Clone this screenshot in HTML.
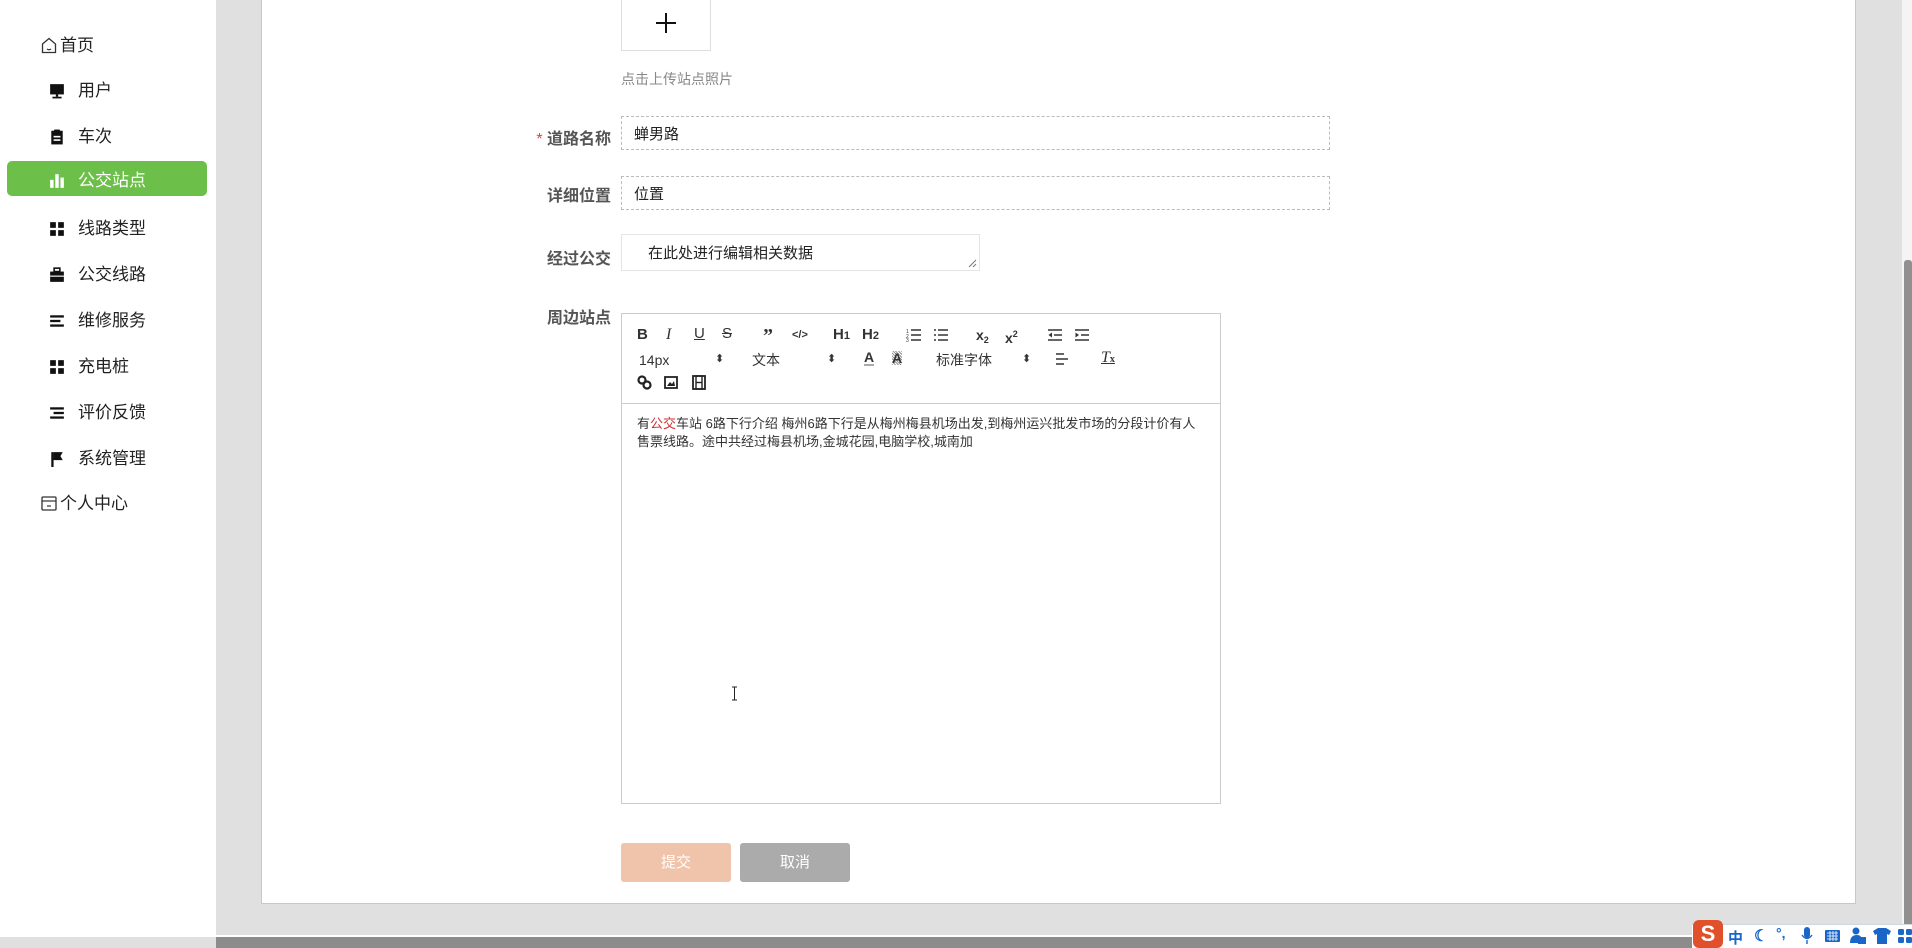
<!DOCTYPE html>
<html><head><meta charset="utf-8">
<style>
*{margin:0;padding:0;box-sizing:border-box}
body{width:1912px;height:948px;overflow:hidden;background:#e0e0e0;font-family:"Liberation Sans","Noto Sans CJK SC",sans-serif;position:relative;color:#333}
.a{position:absolute}
#side{left:0;top:0;width:216px;height:937px;background:#fff}
.it{position:absolute;left:0;width:216px;font-size:17px;color:#222;line-height:20px;height:20px}
.it .ic{position:absolute;left:49px;top:2px;width:16px;height:16px}
.it .tx{position:absolute;left:78px;top:0}
#panel{left:261px;top:-2px;width:1595px;height:906px;background:#fff;border:1px solid #c8c8c8}
.lbl{position:absolute;font-size:16px;color:#555;font-weight:bold;right:1301px;text-align:right}
.inp{position:absolute;left:621px;border:1px dashed #bbb;font-size:15px;color:#222;padding-left:12px}
.tb{position:absolute;font-size:14px;color:#333;line-height:16px}
.btn{position:absolute;top:843px;height:39px;width:110px;border-radius:3px;color:#fff;font-size:15px;text-align:center;line-height:39px}
</style></head><body>
<div class="a" id="side">
  <div class="it" style="top:36px"><svg class="ic" style="left:41px;top:1px;width:16px;height:17px" viewBox="0 0 16 17"><path d="M1.5 7L8 1.5 14.5 7V15.5H1.5Z" fill="none" stroke="#333" stroke-width="1.3"/><path d="M6 12q2 1.5 4 0" fill="none" stroke="#333" stroke-width="1.2"/></svg><span class="tx" style="left:60px">首页</span></div>
  <div class="it" style="top:81px"><svg class="ic" viewBox="0 0 14 14"><rect x="1" y="1" width="12" height="9" fill="#111"/><rect x="6" y="10" width="2" height="2" fill="#111"/><rect x="3" y="12" width="8" height="1.5" fill="#111"/></svg><span class="tx">用户</span></div>
  <div class="it" style="top:127px"><svg class="ic" viewBox="0 0 14 14"><rect x="2" y="1.5" width="10" height="12" fill="#111"/><rect x="4.5" y="0.5" width="5" height="2.5" fill="#111"/><rect x="4" y="6" width="6" height="1.4" fill="#fff"/><rect x="4" y="9" width="6" height="1.4" fill="#fff"/></svg><span class="tx">车次</span></div>
  <div class="a" style="left:7px;top:161px;width:200px;height:35px;background:#6cc04a;border-radius:5px"></div>
  <div class="it" style="top:171px;color:#fff"><svg class="ic" viewBox="0 0 14 14"><rect x="1" y="6" width="3" height="7" fill="#fff"/><rect x="5.5" y="1" width="3" height="12" fill="#fff"/><rect x="10" y="4" width="3" height="9" fill="#fff"/></svg><span class="tx">公交站点</span></div>
  <div class="it" style="top:219px"><svg class="ic" viewBox="0 0 14 14"><rect x="1" y="1" width="5" height="5" fill="#111"/><rect x="8" y="1" width="5" height="5" fill="#111"/><rect x="1" y="8" width="5" height="5" fill="#111"/><rect x="8" y="8" width="5" height="5" fill="#111"/></svg><span class="tx">线路类型</span></div>
  <div class="it" style="top:265px"><svg class="ic" viewBox="0 0 14 14"><rect x="1" y="4" width="12" height="9" fill="#111"/><rect x="4.5" y="1" width="5" height="3" fill="none" stroke="#111" stroke-width="1.4"/><rect x="1" y="7.5" width="12" height="1" fill="#fff"/></svg><span class="tx">公交线路</span></div>
  <div class="it" style="top:311px"><svg class="ic" viewBox="0 0 14 14"><rect x="1" y="2" width="12" height="2" fill="#111"/><rect x="1" y="6" width="9" height="2" fill="#111"/><rect x="1" y="10" width="12" height="2" fill="#111"/></svg><span class="tx">维修服务</span></div>
  <div class="it" style="top:357px"><svg class="ic" viewBox="0 0 14 14"><rect x="1" y="1" width="5" height="5" fill="#111"/><rect x="8" y="1" width="5" height="5" fill="#111"/><rect x="1" y="8" width="5" height="5" fill="#111"/><rect x="8" y="8" width="5" height="5" fill="#111"/></svg><span class="tx">充电桩</span></div>
  <div class="it" style="top:403px"><svg class="ic" viewBox="0 0 14 14"><rect x="1" y="2" width="12" height="2" fill="#111"/><rect x="4" y="6" width="9" height="2" fill="#111"/><rect x="1" y="10" width="12" height="2" fill="#111"/></svg><span class="tx">评价反馈</span></div>
  <div class="it" style="top:449px"><svg class="ic" viewBox="0 0 14 14"><rect x="2" y="1" width="2" height="13" fill="#111"/><path d="M4 1H12L10 4.5 12 8H4Z" fill="#111"/></svg><span class="tx">系统管理</span></div>
  <div class="it" style="top:494px"><svg class="ic" style="left:41px;top:2px;width:16px;height:15px" viewBox="0 0 16 15"><rect x="1" y="1" width="14" height="13" rx="1" fill="none" stroke="#333" stroke-width="1.3"/><path d="M1 5H15" stroke="#333" stroke-width="1.2"/><path d="M6 10H10" stroke="#333" stroke-width="1.2"/></svg><span class="tx" style="left:60px">个人中心</span></div>
</div>

<div class="a" id="panel"></div>
<div class="a" style="left:1902px;top:0;width:10px;height:937px;background:#f4f4f4"></div>
<div class="a" style="left:1904px;top:260px;width:8px;height:675px;background:#909090;border-radius:3px 3px 0 0"></div>
<div class="a" style="left:0;top:935px;width:1912px;height:2px;background:#fff"></div>
<div class="a" style="left:216px;top:937px;width:1696px;height:11px;background:#8c8c8c"></div>

<div class="a" style="left:621px;top:-2px;width:90px;height:53px;border:1px solid #ddd"></div>
<div class="a" style="left:656px;top:22px;width:20px;height:1.6px;background:#111"></div>
<div class="a" style="left:665.2px;top:13px;width:1.6px;height:20px;background:#111"></div>
<div class="a" style="left:621px;top:69px;font-size:14px;color:#888">点击上传站点照片</div>

<div class="lbl" style="top:125px"><span style="color:#e04040;font-weight:normal">* </span>道路名称</div>
<div class="inp" style="top:116px;width:709px;height:34px;line-height:35px">蝉男路</div>
<div class="lbl" style="top:182px">详细位置</div>
<div class="inp" style="top:176px;width:709px;height:34px;line-height:35px">位置</div>
<div class="lbl" style="top:245px">经过公交</div>
<div class="inp" style="top:234px;width:359px;height:37px;line-height:37px;border:1px solid #e5e5e5;padding-left:26px">在此处进行编辑相关数据</div>
<svg class="a" style="left:968px;top:259px" width="9" height="9"><path d="M8 1L1 8M8 5L5 8" stroke="#777"/></svg>
<div class="lbl" style="top:304px">周边站点</div>

<div class="a" style="left:621px;top:313px;width:600px;height:491px;border:1px solid #ccc"></div>
<div class="a" style="left:622px;top:403px;width:598px;height:1px;background:#ccc"></div>
<div class="tb" style="left:637px;top:327px;font-weight:bold;font-size:15px">B</div>
<div class="tb" style="left:666px;top:327px;font-style:italic;font-family:'Liberation Serif',serif;font-size:16px">I</div>
<div class="tb" style="left:694px;top:326px;text-decoration:underline;font-size:15px">U</div>
<div class="tb" style="left:722px;top:326px;text-decoration:line-through;font-size:15px">S</div>
<div class="tb" style="left:763px;top:328px;font-weight:bold;font-size:20px;font-family:'Liberation Serif',serif">”</div>
<div class="tb" style="left:792px;top:327px;font-size:11px;font-weight:bold">&lt;/&gt;</div>
<div class="tb" style="left:833px;top:327px;font-size:15px;font-weight:bold">H<span style="font-size:11px">1</span></div>
<div class="tb" style="left:862px;top:327px;font-size:15px;font-weight:bold">H<span style="font-size:11px">2</span></div>
<svg class="a" style="left:906px;top:328px" width="16" height="14"><path d="M5 2H15M5 7H15M5 12H15" stroke="#333" stroke-width="1.4"/><text x="0" y="5" font-size="5" fill="#333">1</text><text x="0" y="10" font-size="5" fill="#333">2</text><text x="0" y="14" font-size="5" fill="#333">3</text></svg>
<svg class="a" style="left:933px;top:328px" width="16" height="14"><path d="M5 2H15M5 7H15M5 12H15M1 2H3M1 7H3M1 12H3" stroke="#333" stroke-width="1.4"/></svg>
<div class="tb" style="left:976px;top:327px;font-weight:bold;font-size:14px">x<span style="font-size:9px;vertical-align:-3px">2</span></div>
<div class="tb" style="left:1005px;top:326px;font-weight:bold;font-size:14px">x<span style="font-size:9px;vertical-align:6px">2</span></div>
<svg class="a" style="left:1047px;top:328px" width="16" height="14"><path d="M1 2H15M7 7H15M1 12H15" stroke="#333" stroke-width="1.6"/><path d="M5 4.5L1.5 7 5 9.5Z" fill="#333"/></svg>
<svg class="a" style="left:1074px;top:328px" width="16" height="14"><path d="M1 2H15M7 7H15M1 12H15" stroke="#333" stroke-width="1.6"/><path d="M1.5 4.5L5 7 1.5 9.5Z" fill="#333"/></svg>

<div class="tb" style="left:639px;top:352px;font-size:14px">14px</div>
<div class="tb" style="left:715px;top:351px;font-size:11px">⬍</div>
<div class="tb" style="left:752px;top:352px;font-size:14px">文本</div>
<div class="tb" style="left:827px;top:351px;font-size:11px">⬍</div>
<div class="tb" style="left:864px;top:350px;font-weight:bold;font-size:14px;border-bottom:2px solid #aaa;line-height:14px">A</div>
<div class="tb" style="left:892px;top:351px;font-weight:bold;font-size:14px;background:repeating-linear-gradient(45deg,#999 0 1px,#fff 1px 2px);line-height:14px">A</div>
<div class="tb" style="left:936px;top:352px;font-size:14px">标准字体</div>
<div class="tb" style="left:1022px;top:351px;font-size:11px">⬍</div>
<svg class="a" style="left:1055px;top:352px" width="14" height="14"><path d="M1 2H9M1 7H13M1 12H9" stroke="#333" stroke-width="1.6"/></svg>
<div class="tb" style="left:1101px;top:350px;font-style:italic;font-family:'Liberation Serif',serif;font-size:16px;text-decoration:underline">T<span style="font-size:10px;font-style:normal;font-weight:bold">x</span></div>

<svg class="a" style="left:637px;top:375px" width="15" height="15"><circle cx="5" cy="5" r="3.5" fill="none" stroke="#222" stroke-width="2.2"/><circle cx="10" cy="10" r="3.5" fill="none" stroke="#222" stroke-width="2.2"/></svg>
<svg class="a" style="left:664px;top:376px" width="14" height="13"><rect x="1" y="1" width="12" height="11" fill="none" stroke="#222" stroke-width="1.8"/><path d="M3 10L6 6 8 8 10 5 11 10Z" fill="#222"/></svg>
<svg class="a" style="left:692px;top:375px" width="14" height="15"><rect x="1" y="1" width="12" height="13" fill="none" stroke="#222" stroke-width="1.8"/><rect x="4" y="1" width="6" height="13" fill="none" stroke="#222" stroke-width="1.4"/><path d="M4 7.5H10" stroke="#222" stroke-width="1.4"/></svg>

<div class="a" style="left:637px;top:415px;font-size:13px;line-height:18px;color:#333;width:570px">有<span style="color:#d03030">公交</span>车站 6路下行介绍 梅州6路下行是从梅州梅县机场出发,到梅州运兴批发市场的分段计价有人售票线路。途中共经过梅县机场,金城花园,电脑学校,城南加</div>

<div class="a" style="left:731px;top:686px;width:7px;height:15px"><svg width="7" height="15"><path d="M1 1H6M3.5 1V14M1 14H6" stroke="#222" stroke-width="1"/></svg></div>

<div class="btn" style="left:621px;background:#f0c3ab">提交</div>
<div class="btn" style="left:740px;background:#ababab">取消</div>

<div class="a" style="left:1692px;top:924px;width:220px;height:24px;background:#fff;border-top:1px solid #cfd8e0"></div>
<div class="a" style="left:1693px;top:920px;width:30px;height:28px;background:#e0502a;border-radius:6px;color:#fff;font-weight:bold;font-size:22px;text-align:center;line-height:28px">S</div>
<div class="a" style="left:1728px;top:927px;font-size:15px;color:#1a66c8;font-weight:bold">中</div>
<div class="a" style="left:1754px;top:926px;font-size:16px;color:#1a66c8;font-weight:bold">☾</div>
<div class="a" style="left:1776px;top:925px;font-size:14px;color:#1a66c8;font-weight:bold">°,</div>
<svg class="a" style="left:1801px;top:927px" width="12" height="18"><rect x="3" y="0" width="6" height="11" rx="3" fill="#1a66c8"/><path d="M1 8q5 7 10 0M6 13V17" stroke="#1a66c8" fill="none" stroke-width="1.4"/></svg>
<svg class="a" style="left:1825px;top:930px" width="15" height="12"><rect x="0" y="0" width="15" height="12" rx="1" fill="#1a66c8"/><path d="M2 3H13M2 6H13M2 9H13M5 1V11M8 1V11M11 1V11" stroke="#fff" stroke-width=".8"/></svg>
<svg class="a" style="left:1850px;top:927px" width="16" height="17"><circle cx="6" cy="4" r="3.5" fill="#1a66c8"/><path d="M0 16q0-8 7-8 3 0 4 2V16Z" fill="#1a66c8"/><rect x="8" y="10" width="8" height="7" fill="#1a66c8"/></svg>
<svg class="a" style="left:1873px;top:928px" width="18" height="16"><path d="M0 3L5 0H13L18 3 16 7 14 6V16H4V6L2 7Z" fill="#1a66c8"/></svg>
<svg class="a" style="left:1898px;top:929px" width="14" height="14"><rect x="0" y="0" width="6" height="6" rx="1.5" fill="#1a66c8"/><rect x="8" y="0" width="6" height="6" rx="1.5" fill="#1a66c8"/><rect x="0" y="8" width="6" height="6" rx="1.5" fill="#1a66c8"/><rect x="8" y="8" width="6" height="6" rx="1.5" fill="#1a66c8"/></svg>
</body></html>
